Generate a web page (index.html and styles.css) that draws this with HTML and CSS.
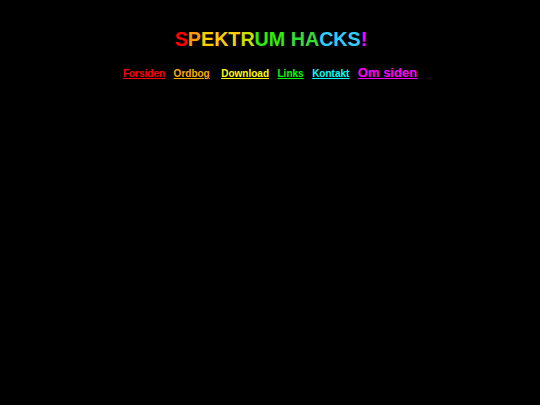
FILE: index.html
```html
<!DOCTYPE html>
<html>
<head>
<meta charset="utf-8">
<link rel="stylesheet" href="styles.css">
</head>
<body>
<div class="page">
  <h1 class="title"><span class="c1">S</span><span class="c2">P</span><span class="c3">E</span><span class="c3">K</span><span class="c3">T</span><span class="c4">R</span><span class="c5">U</span><span class="c5">M</span> <span class="c6">H</span><span class="c6">A</span><span class="c7">C</span><span class="c7">K</span><span class="c7">S</span><span class="c8">!</span></h1>
  <nav class="nav">
    <a class="l1" href="#">Forsiden</a>
    <a class="l2" href="#">Ordbog</a>
    <a class="l3" href="#">Download</a>
    <a class="l4" href="#">Links</a>
    <a class="l5" href="#">Kontakt</a>
    <a class="l6" href="#">Om siden</a>
  </nav>
</div>
</body>
</html>
```
FILE: styles.css
```css
html, body {
  margin: 0;
  background: #000;
}
body {
  font-family: "Comic Sans MS", "Liberation Sans", sans-serif;
}
.page {
  display: flex;
  flex-direction: column;
  align-items: center;
  padding-top: 27px;
}
.title {
  margin: 0 0 0 2px;
  font-size: 19.7px;
  font-weight: bold;
  line-height: 24px;
}
.c1 { color: #ff0000; }
.c2 { color: #ff9900; }
.c3 { color: #ffcc00; }
.c4 { color: #ccdd00; }
.c5 { color: #33ee00; }
.c6 { color: #33dd33; }
.c7 { color: #33ccff; }
.c8 { color: #ff00ff; }
.nav {
  display: flex;
  align-items: baseline;
  gap: 8.5px;
  margin-top: 14px;
  font-size: 10px;
  font-weight: bold;
}
.l1 { color: #ff0000; }
.l2 { color: #ffaa00; margin-right: 3px; }
.l3 { color: #ffff00; }
.l4 { color: #00ff00; }
.l5 { color: #00ffff; }
.l6 { color: #ff00ff; font-size: 13px; }
```
